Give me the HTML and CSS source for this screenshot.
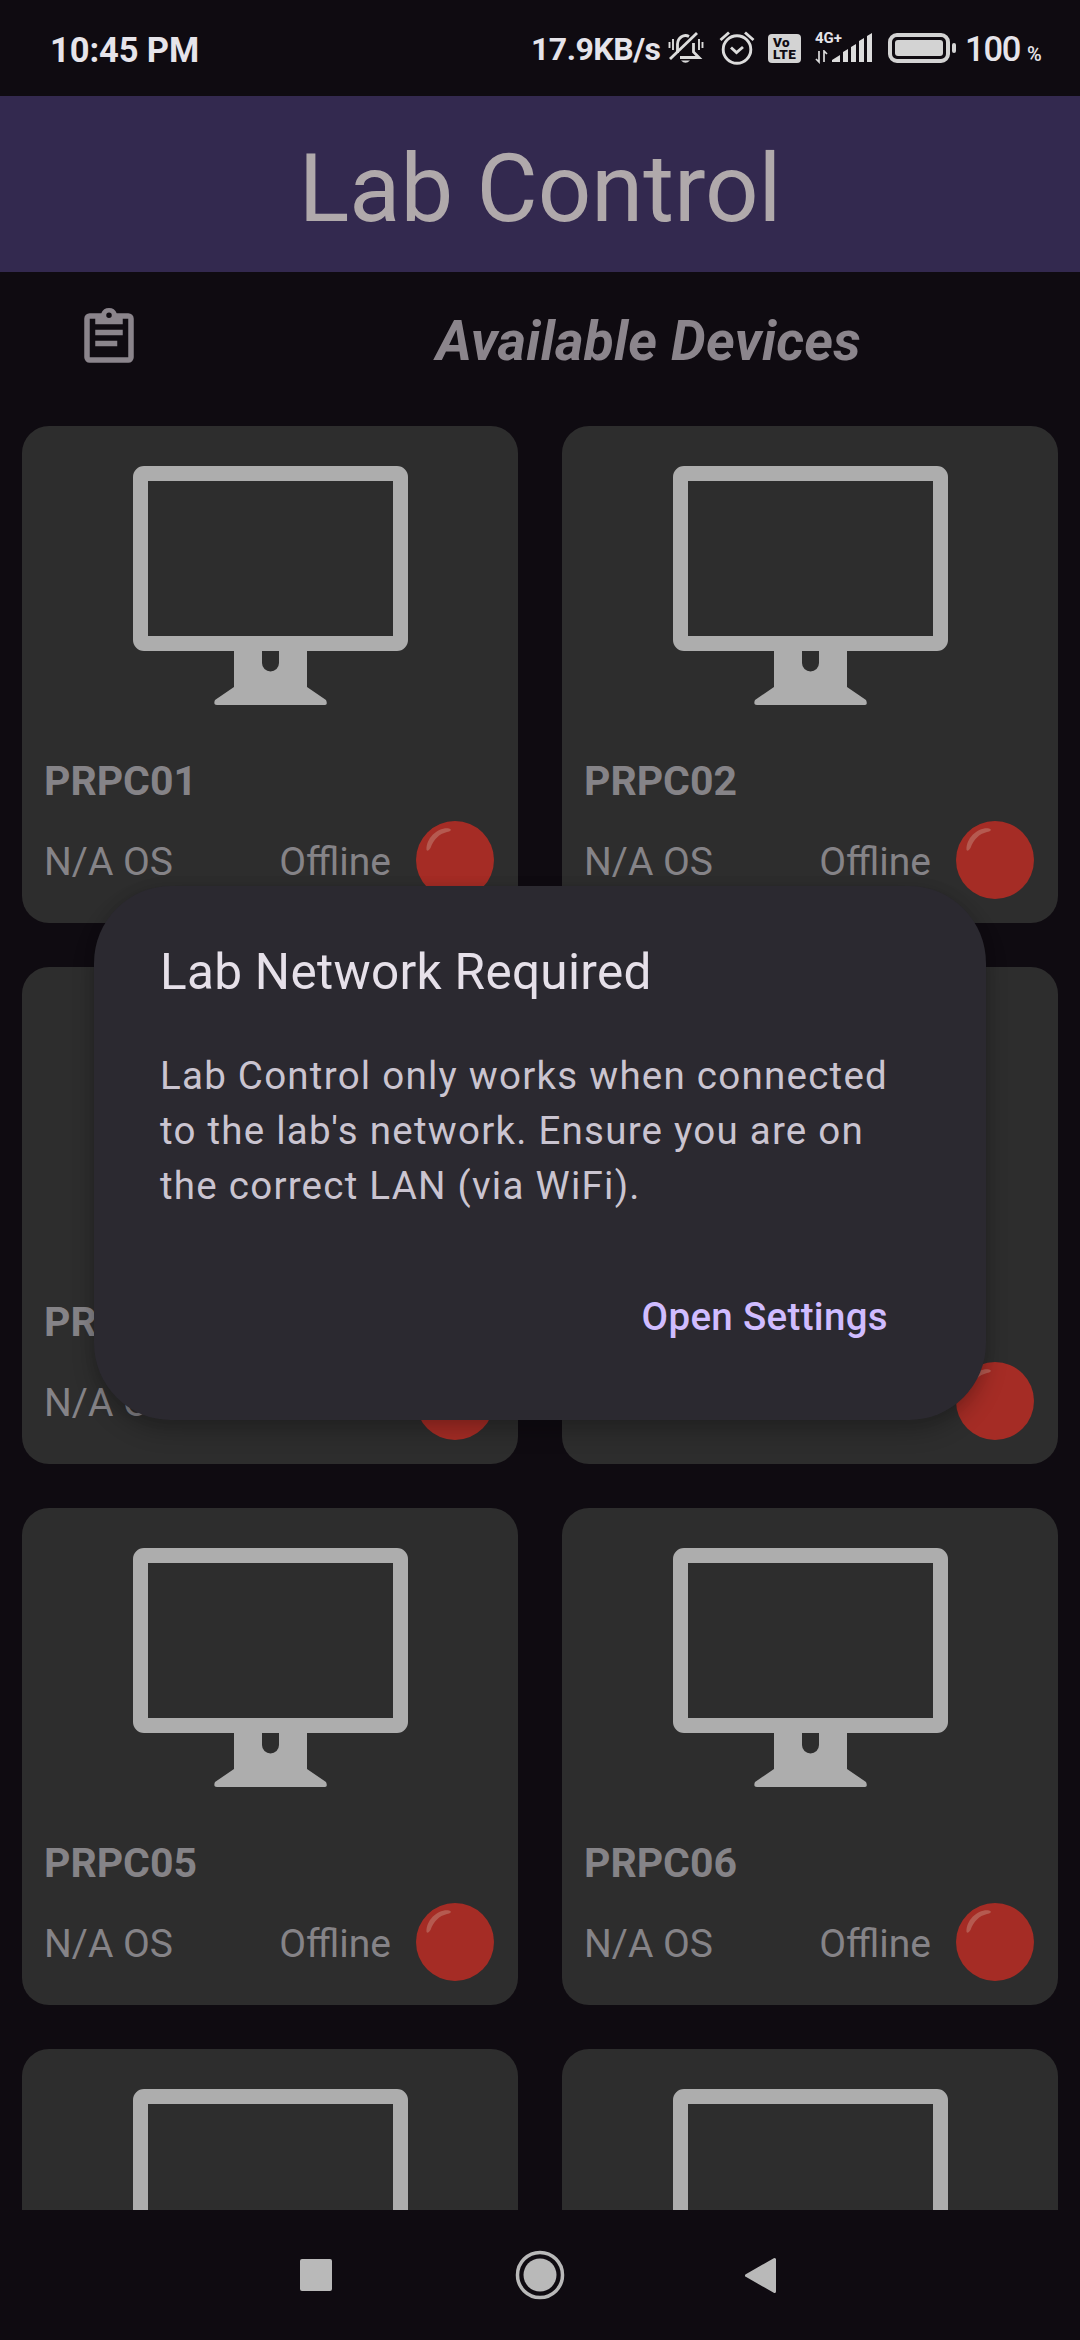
FILE: index.html
```html
<!DOCTYPE html>
<html lang="en">
<head>
<meta charset="utf-8">
<title>Lab Control</title>
<link rel="stylesheet" href="styles.css">
</head>
<body>
<svg class="defs" width="0" height="0">
  <symbol id="monitor" viewBox="0 0 275 239">
    <path fill-rule="evenodd" d="M11 0H264A11 11 0 0 1 275 11V174A11 11 0 0 1 264 185H174V221L193 234Q195 239 192 239H84Q80 239 82 234L101 221V185H11A11 11 0 0 1 0 174V11A11 11 0 0 1 11 0ZM15 15V170H260V15ZM129 185V197A8.500 8.500 0 0 0 146 197V185Z"/>
  </symbol>
  <symbol id="status-dot" viewBox="0 0 78 78">
    <circle cx="39" cy="39" r="39" fill="#a52c25"/>
    <path d="M10.500 29C10 17 22 6 33 7.500C37 8.500 34 10.500 31 11C23 13 18 18 14.500 27Q12 31 10.500 29Z" fill="#b55a50"/>
  </symbol>
</svg>
<div class="screen">
  <header class="status">
    <span class="clock">10:45 PM</span>
    <span class="speed">17.9KB/s</span>
    <svg class="bell" viewBox="0 0 36 36"><g fill="none" stroke="#dcdcdc" stroke-width="2.800"><path d="M9.500 23V14A8 9 0 0 1 21 6.500M25.500 13V22L31 27.500H12"/><path d="M2 29L29 3"/><path d="M5 9V20M1.500 12V18M31 9V20M34.500 12V18" stroke-width="1.900"/></g><path d="M13 30.500H22Q17.500 35 13 30.500Z" fill="#dcdcdc"/></svg>
    <svg class="alarm" viewBox="0 0 36 36"><g fill="none" stroke="#dcdcdc" stroke-width="2.900"><circle cx="18" cy="19.500" r="13.800"/><path d="M12 17.500L17.500 22.500L24 17"/><path d="M1.500 10L10 2.500M26 2.500L34.500 10"/></g></svg>
    <span class="volte"><b>Vo</b><b>LTE</b></span>
    <div class="net"><span>4G+</span><svg viewBox="0 0 14 14"><path d="M4 1V12L1 9M9 12V1L12 4" fill="none" stroke="#dcdcdc" stroke-width="1.700"/></svg></div>
    <svg class="bars" viewBox="0 0 41 30"><path fill="#dcdcdc" d="M0 29V27L8 22V29ZM11 29V19L16 16V29ZM19 29V14L24 11V29ZM27 29V8L32 5V29ZM35 29V3L40 0V29Z"/></svg>
    <svg class="battery" viewBox="0 0 70 30"><rect x="2" y="2" width="58" height="26" rx="7" fill="none" stroke="#d3d3d3" stroke-width="4"/><rect x="7" y="7" width="48" height="16" rx="3" fill="#d3d3d3"/><rect x="64" y="10" width="4" height="10" rx="2" fill="#d3d3d3"/></svg>
    <span class="pct">100</span><span class="sign">%</span>
  </header>
  <h1 class="title">Lab Control</h1>
  <section class="heading">
    <svg class="clip" viewBox="0 0 24 24"><path fill-rule="evenodd" d="M5 3H9.200A3 3 0 0 1 14.800 3H19A2 2 0 0 1 21 5V19A2 2 0 0 1 19 21H5A2 2 0 0 1 3 19V5A2 2 0 0 1 5 3ZM5 5V19H19V5H17V7H7V5ZM12 2.750A1 1 0 0 0 12 4.750A1 1 0 0 0 12 2.750ZM7 9H17V11H7ZM7 13H15V15H7Z"/></svg>
    <h2>Available Devices</h2>
  </section>
  <main class="grid">
    <article class="card"><svg class="pc"><use href="#monitor"/></svg><h3>PRPC01</h3><div class="info"><span>N/A OS</span><span class="state">Offline</span><svg class="dot"><use href="#status-dot"/></svg></div></article>
    <article class="card"><svg class="pc"><use href="#monitor"/></svg><h3>PRPC02</h3><div class="info"><span>N/A OS</span><span class="state">Offline</span><svg class="dot"><use href="#status-dot"/></svg></div></article>
    <article class="card"><svg class="pc"><use href="#monitor"/></svg><h3>PRPC03</h3><div class="info"><span>N/A OS</span><span class="state">Offline</span><svg class="dot"><use href="#status-dot"/></svg></div></article>
    <article class="card"><svg class="pc"><use href="#monitor"/></svg><h3>PRPC04</h3><div class="info"><span>N/A OS</span><span class="state">Offline</span><svg class="dot"><use href="#status-dot"/></svg></div></article>
    <article class="card"><svg class="pc"><use href="#monitor"/></svg><h3>PRPC05</h3><div class="info"><span>N/A OS</span><span class="state">Offline</span><svg class="dot"><use href="#status-dot"/></svg></div></article>
    <article class="card"><svg class="pc"><use href="#monitor"/></svg><h3>PRPC06</h3><div class="info"><span>N/A OS</span><span class="state">Offline</span><svg class="dot"><use href="#status-dot"/></svg></div></article>
    <article class="card"><svg class="pc"><use href="#monitor"/></svg></article>
    <article class="card"><svg class="pc"><use href="#monitor"/></svg></article>
  </main>
  <nav class="nav">
    <svg viewBox="0 0 50 50"><rect x="9" y="9" width="32" height="32" rx="2"/></svg>
    <svg viewBox="0 0 50 50"><circle cx="25" cy="25" r="16.500"/><circle cx="25" cy="25" r="22.500" fill="none" stroke="#b9b9b9" stroke-width="3.500"/></svg>
    <svg viewBox="0 0 50 50"><path d="M7.500 25.500L35.500 9.500V41.500Z" stroke="#b9b9b9" stroke-width="3" stroke-linejoin="round"/></svg>
  </nav>
  <div class="dialog" role="dialog">
    <h4>Lab Network Required</h4>
    <p>Lab Control only works when connected<br>to the lab's network. Ensure you are on<br>the correct LAN (via WiFi).</p>
    <button>Open Settings</button>
  </div>
</div>
</body>
</html>
```
FILE: styles.css
```css
* { box-sizing: border-box; }
body { margin: 0; background: #0f0b11; font-family: Roboto, sans-serif; }
h1, h2, h3, h4, p { margin: 0; font-weight: 400; white-space: nowrap; }
.defs { display: block; position: absolute; }
.screen { position: relative; width: 1080px; height: 2340px; overflow: hidden; display: flex; flex-direction: column; }
.screen > * { flex-shrink: 0; }

.status { height: 96px; padding: 0 36px 0 50px; display: flex; align-items: center; color: #e6e4ea; white-space: nowrap; }
.status > * { flex-shrink: 0; }
.clock { width: 481px; font-size: 34.500px; font-weight: 700; line-height: 40px; letter-spacing: -.1px; margin-top: 3px; }
.speed { width: 137px; font-size: 32px; font-weight: 700; line-height: 40px; letter-spacing: -.5px; margin-top: 2px; }
.bell { width: 36px; height: 36px; margin-right: 15px; }
.alarm { width: 36px; height: 36px; margin-right: 13px; }
.volte { width: 33px; height: 29px; margin-right: 14px; border-radius: 4px; background: #d3d3d3; color: #0f0b11; display: flex; flex-direction: column; padding: 2px 0 0 5px; font: 700 13.500px/12.500px Roboto, sans-serif; letter-spacing: .4px; }
.net { width: 17px; height: 34px; display: flex; flex-direction: column; font-weight: 700; font-size: 15px; line-height: 15px; }
.net svg { width: 14px; height: 14px; margin-top: 4px; }
.bars { width: 41px; height: 30px; margin-right: 15px; }
.battery { width: 70px; height: 30px; margin-right: 7px; }
.pct { width: 62px; font-size: 34.500px; font-weight: 500; line-height: 40px; letter-spacing: -1.2px; margin-top: 2px; }
.sign { font-size: 20px; font-weight: 500; line-height: 20px; margin-top: 12px; }

.title { height: 176px; padding-top: 38px; background: #33294f; color: #b0a9ab; font-size: 94px; line-height: 110px; text-align: center; }
.heading { height: 154px; padding: 33px 0 0 76px; display: flex; color: #8b858c; }
.clip { width: 66px; height: 66px; fill: currentColor; }
.heading h2 { margin: 1px 0 0 294px; font-size: 55px; font-weight: 700; font-style: italic; line-height: 70px; letter-spacing: .22px; }

.grid { height: 1784px; padding: 0 22px; overflow: hidden; display: grid; grid-template-columns: 496px 496px; grid-auto-rows: 497px; gap: 44px; }
.card { border-radius: 27px; background: #2d2d2d; color: #858387; padding: 40px 22px 0; display: flex; flex-direction: column; }
.pc { width: 275px; height: 239px; margin: 0 auto; flex-shrink: 0; fill: #adadad; }
.card h3 { margin-top: 51px; font-size: 41px; font-weight: 700; line-height: 50px; }
.info { margin-top: 15px; height: 78px; display: flex; align-items: center; font-size: 39px; }
.info span { padding-top: 4px; }
.state { margin-left: auto; margin-right: 25px; }
.dot { width: 78px; height: 78px; margin-right: 2px; }

.nav { height: 130px; display: flex; justify-content: center; align-items: center; gap: 174px; }
.nav svg { width: 50px; height: 50px; fill: #b9b9b9; }

.dialog { position: absolute; left: 94px; top: 886px; width: 892px; height: 534px; padding: 56px 66px; border-radius: 77px; background: #2b2930; box-shadow: 0 12px 22px rgba(0,0,0,.22), 0 0 12px rgba(0,0,0,.1); display: flex; flex-direction: column; }
.dialog h4 { color: #e6e0e9; font-size: 49.500px; line-height: 60px; letter-spacing: .3px; }
.dialog p { margin-top: 46px; color: #cac4d0; font-size: 38.500px; line-height: 55px; letter-spacing: 1.250px; }
.dialog button { margin: 76px 32px 0 auto; padding: 0; border: 0; background: none; color: #d0bcff; font: 500 38.500px/55px Roboto, sans-serif; letter-spacing: .320px; }
```
